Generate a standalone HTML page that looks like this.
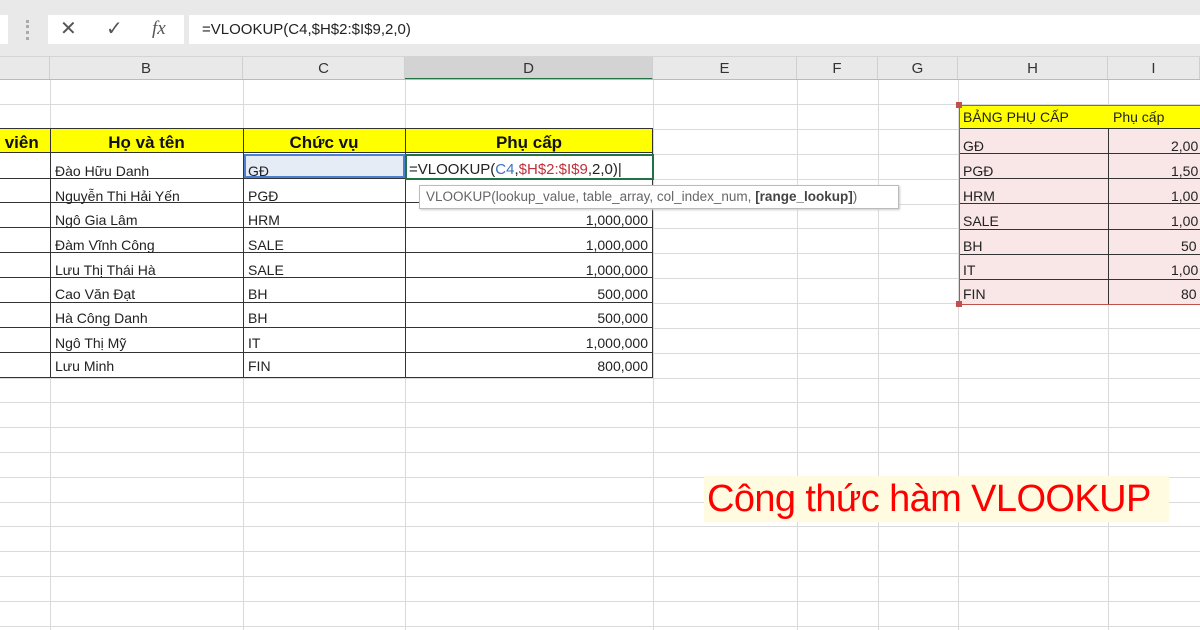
<!DOCTYPE html><html><head><meta charset="utf-8"><style>
body{margin:0;width:1200px;height:630px;overflow:hidden;background:#fff;position:relative;font-family:"Liberation Sans",sans-serif}
div{position:absolute;box-sizing:border-box}
.t{font-size:14px;color:#222;white-space:nowrap;line-height:24px}
.hl{left:0;width:1200px;height:1px;background:#dadada}
.vl{top:80px;height:550px;width:1px;background:#dadada}
.ch{top:57px;height:23px;font-size:15px;color:#333;text-align:center;line-height:23px;border-right:1px solid #cfcfcf}
.hd{top:131px;text-align:center;font-size:17px;font-weight:bold;color:#111}
</style></head><body>
<div style="left:0;top:0;width:1200px;height:80px;background:#e9e9e9"></div>
<div style="left:0;top:15px;width:8px;height:29px;background:#fff"></div>
<div style="left:26px;top:20px;width:3px;height:20px;border-left:3px dotted #aaa"></div>
<div style="left:48px;top:15px;width:136px;height:29px;background:#fff"></div>
<div class="t" style="left:60px;top:17px;font-size:20px;color:#555">✕</div>
<div class="t" style="left:106px;top:17px;font-size:20px;color:#555">✓</div>
<div class="t" style="left:152px;top:17px;font-family:'Liberation Serif';font-style:italic;font-size:19px;color:#555">fx</div>
<div style="left:189px;top:15px;width:1011px;height:29px;background:#fff"></div>
<div class="t" style="left:202px;top:18px;font-size:15px">=VLOOKUP(C4,$H$2:$I$9,2,0)</div>
<div style="left:0;top:56px;width:1200px;height:1px;background:#d4d4d4"></div>
<div class="ch" style="left:0;width:50px"></div>
<div class="ch" style="left:50px;width:193px">B</div>
<div class="ch" style="left:243px;width:162px">C</div>
<div class="ch" style="left:405px;width:248px;background:#d3d3d3;border-bottom:2px solid #217346">D</div>
<div class="ch" style="left:653px;width:144px">E</div>
<div class="ch" style="left:797px;width:81px">F</div>
<div class="ch" style="left:878px;width:80px">G</div>
<div class="ch" style="left:958px;width:150px">H</div>
<div class="ch" style="left:1108px;width:92px">I</div>
<div style="left:0;top:79px;width:1200px;height:1px;background:#bbb"></div>
<div class="hl" style="top:104px"></div><div class="hl" style="top:129px"></div><div class="hl" style="top:154px"></div><div class="hl" style="top:179px"></div><div class="hl" style="top:204px"></div><div class="hl" style="top:228px"></div><div class="hl" style="top:253px"></div><div class="hl" style="top:278px"></div><div class="hl" style="top:303px"></div><div class="hl" style="top:328px"></div><div class="hl" style="top:353px"></div><div class="hl" style="top:378px"></div><div class="hl" style="top:402px"></div><div class="hl" style="top:427px"></div><div class="hl" style="top:452px"></div><div class="hl" style="top:477px"></div><div class="hl" style="top:502px"></div><div class="hl" style="top:526px"></div><div class="hl" style="top:551px"></div><div class="hl" style="top:576px"></div><div class="hl" style="top:601px"></div><div class="hl" style="top:626px"></div>
<div class="vl" style="left:50px"></div><div class="vl" style="left:243px"></div><div class="vl" style="left:405px"></div><div class="vl" style="left:653px"></div><div class="vl" style="left:797px"></div><div class="vl" style="left:878px"></div><div class="vl" style="left:958px"></div><div class="vl" style="left:1108px"></div>
<div style="left:0;top:128px;width:653px;height:25px;background:#ffff00;border:1px solid #333;border-left:none"></div>
<div style="left:0;top:153px;width:653px;height:225px;background:#fff;border-bottom:1px solid #333;border-right:1px solid #333"></div>
<div style="left:50px;top:128px;width:1px;height:250px;background:#333"></div>
<div style="left:243px;top:128px;width:1px;height:250px;background:#333"></div>
<div style="left:405px;top:128px;width:1px;height:250px;background:#333"></div>
<div style="left:0;top:178px;width:653px;height:1px;background:#333"></div><div style="left:0;top:202px;width:653px;height:1px;background:#333"></div><div style="left:0;top:227px;width:653px;height:1px;background:#333"></div><div style="left:0;top:252px;width:653px;height:1px;background:#333"></div><div style="left:0;top:277px;width:653px;height:1px;background:#333"></div><div style="left:0;top:302px;width:653px;height:1px;background:#333"></div><div style="left:0;top:327px;width:653px;height:1px;background:#333"></div><div style="left:0;top:352px;width:653px;height:1px;background:#333"></div>
<div class="t hd" style="left:0;text-align:left">&nbsp;viên</div>
<div class="t hd" style="left:50px;width:193px">Họ và tên</div>
<div class="t hd" style="left:243px;width:162px">Chức vụ</div>
<div class="t hd" style="left:405px;width:248px">Phụ cấp</div>
<div style="left:244px;top:154px;width:161px;height:24px;background:#e6ecf6;border:2px solid #4a7fd1"></div>
<div style="left:405px;top:154px;width:249px;height:26px;border:2px solid #217346;background:#fff"></div>
<div class="t" style="left:55px;top:159px">Đào Hữu Danh</div><div class="t" style="left:248px;top:159px">GĐ</div>
<div class="t" style="left:409px;top:158px;font-size:15px">=VLOOKUP(<span style="color:#3c6fc0">C4</span>,<span style="color:#c0303a">$H$2:$I$9</span>,2,0)|</div>
<div class="t" style="left:55px;top:184px">Nguyễn Thị Hải Yến</div><div class="t" style="left:248px;top:184px">PGĐ</div>
<div class="t" style="left:55px;top:208px">Ngô Gia Lâm</div><div class="t" style="left:248px;top:208px">HRM</div><div class="t" style="left:405px;width:243px;text-align:right;top:208px">1,000,000</div>
<div class="t" style="left:55px;top:233px">Đàm Vĩnh Công</div><div class="t" style="left:248px;top:233px">SALE</div><div class="t" style="left:405px;width:243px;text-align:right;top:233px">1,000,000</div>
<div class="t" style="left:55px;top:258px">Lưu Thị Thái Hà</div><div class="t" style="left:248px;top:258px">SALE</div><div class="t" style="left:405px;width:243px;text-align:right;top:258px">1,000,000</div>
<div class="t" style="left:55px;top:282px">Cao Văn Đạt</div><div class="t" style="left:248px;top:282px">BH</div><div class="t" style="left:405px;width:243px;text-align:right;top:282px">500,000</div>
<div class="t" style="left:55px;top:306px">Hà Công Danh</div><div class="t" style="left:248px;top:306px">BH</div><div class="t" style="left:405px;width:243px;text-align:right;top:306px">500,000</div>
<div class="t" style="left:55px;top:331px">Ngô Thị Mỹ</div><div class="t" style="left:248px;top:331px">IT</div><div class="t" style="left:405px;width:243px;text-align:right;top:331px">1,000,000</div>
<div class="t" style="left:55px;top:354px">Lưu Minh</div><div class="t" style="left:248px;top:354px">FIN</div><div class="t" style="left:405px;width:243px;text-align:right;top:354px">800,000</div>
<div class="t" style="left:419px;top:185px;width:480px;height:24px;background:#fff;border:1px solid #bbb;box-shadow:1px 1px 2px #ccc;font-size:13.5px;color:#666;padding-left:6px;line-height:22px">VLOOKUP(lookup_value, table_array, col_index_num, <b style="color:#444">[range_lookup]</b>)</div>
<div style="left:959px;top:105px;width:241px;height:200px;background:#f9e6e6;border:1px solid #c0504d;border-right:none"></div>
<div style="left:960px;top:106px;width:240px;height:22px;background:#ffff00"></div>
<div style="left:960px;top:128px;width:240px;height:1px;background:#333"></div><div style="left:960px;top:153px;width:240px;height:1px;background:#333"></div><div style="left:960px;top:178px;width:240px;height:1px;background:#333"></div><div style="left:960px;top:203px;width:240px;height:1px;background:#333"></div><div style="left:960px;top:229px;width:240px;height:1px;background:#333"></div><div style="left:960px;top:254px;width:240px;height:1px;background:#333"></div><div style="left:960px;top:279px;width:240px;height:1px;background:#333"></div>
<div style="left:1108px;top:128px;width:1px;height:176px;background:#333"></div>
<div class="t" style="left:963px;top:106px;font-size:14px;line-height:22px">BẢNG PHỤ CẤP</div><div class="t" style="left:1113px;top:106px;font-size:14px;line-height:22px">Phụ cấp</div>
<div class="t" style="left:963px;top:134px">GĐ</div><div class="t" style="left:1171px;top:134px">2,00</div>
<div class="t" style="left:963px;top:159px">PGĐ</div><div class="t" style="left:1171px;top:159px">1,50</div>
<div class="t" style="left:963px;top:184px">HRM</div><div class="t" style="left:1171px;top:184px">1,00</div>
<div class="t" style="left:963px;top:209px">SALE</div><div class="t" style="left:1171px;top:209px">1,00</div>
<div class="t" style="left:963px;top:234px">BH</div><div class="t" style="left:1181px;top:234px">50</div>
<div class="t" style="left:963px;top:258px">IT</div><div class="t" style="left:1171px;top:258px">1,00</div>
<div class="t" style="left:963px;top:282px">FIN</div><div class="t" style="left:1181px;top:282px">80</div>
<div style="left:956px;top:102px;width:6px;height:6px;background:#c0504d"></div><div style="left:956px;top:301px;width:6px;height:6px;background:#c0504d"></div>
<div style="left:704px;top:476px;width:465px;height:46px;background:#fffbe0;color:#f00;font-size:38px;line-height:46px;padding-left:3px;white-space:nowrap;letter-spacing:-0.6px">Công thức hàm VLOOKUP</div>
</body></html>
